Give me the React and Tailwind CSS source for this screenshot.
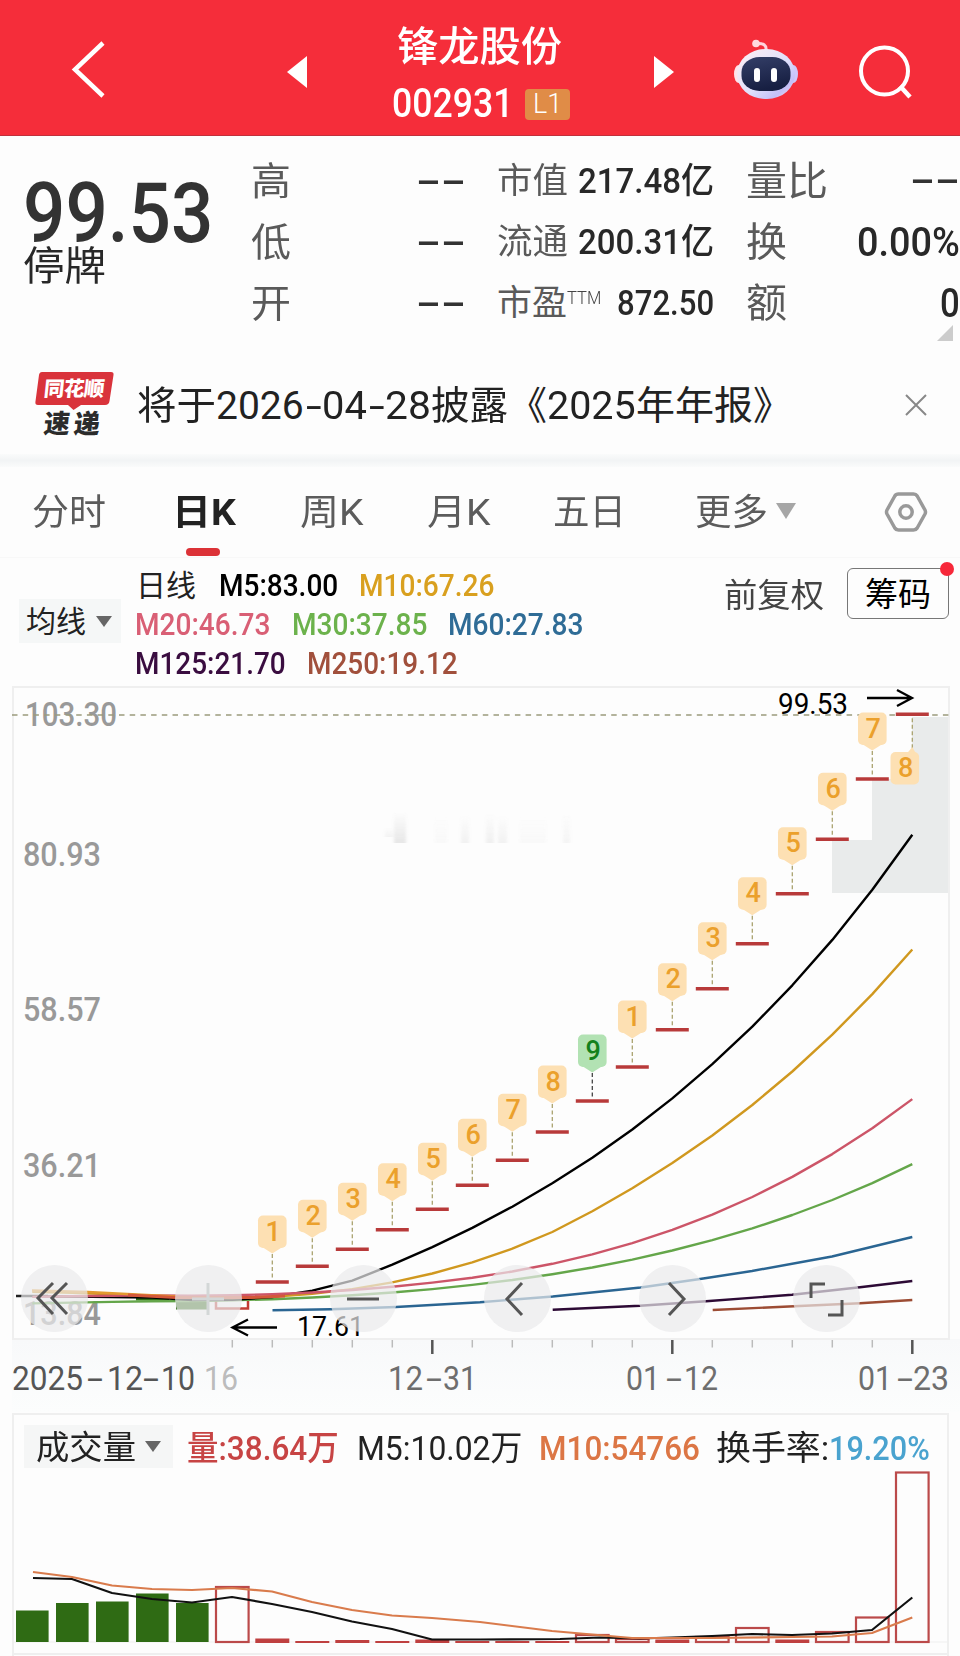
import { useLayoutEffect, useRef, useState } from 'react'
import clsx from 'clsx'

const FONT = 'Roboto, "Noto Sans CJK SC", sans-serif'

const step = 40
const colX = (i) => 32.3 + i * step
const priceY = (p) => 714.3 + (99.53 - p) * 7.29

// closes before the first visible candle, oldest first
const history = [
  16.4, 16.5, 16.6, 16.7, 16.8, 16.8, 16.9, 17, 17.1, 17.2,
  17.6, 17.9, 18.2, 18.4, 18.5, 18.7, 18.9, 19.1, 19.4, 19.6,
  20.6, 21.2, 21.4, 21.1, 20.8, 20.1, 19.9, 19.8, 19.7, 19.6,
]
const closes = [
  19.6, 19.6, 19.5, 19.3, 17.89, 19.68, 21.65, 23.82, 26.2, 28.82, 31.7, 34.87,
  38.36, 42.2, 46.42, 51.06, 56.17, 61.79, 67.97, 74.77, 82.25, 90.48, 99.53,
]

const barY = [
  1282, 1266.3, 1249.3, 1229.7, 1209.3, 1185.3, 1160.3, 1132, 1101, 1067,
  1029.7, 988.7, 943.7, 893.7, 839.3, 779, 714.3,
]
const counts = [1, 2, 3, 4, 5, 6, 7, 8, 9, 1, 2, 3, 4, 5, 6, 7, 8]

const volumes = [
  { top: 1610.5, type: 'down' },
  { top: 1603, type: 'down' },
  { top: 1601.5, type: 'down' },
  { top: 1593.5, type: 'down' },
  { top: 1603, type: 'down' },
  { top: 1587, type: 'up' },
  { top: 1638.5, type: 'flat' },
  { top: 1641, type: 'flat' },
  { top: 1640, type: 'flat' },
  { top: 1641, type: 'flat' },
  { top: 1639.5, type: 'flat' },
  { top: 1641, type: 'flat' },
  { top: 1641, type: 'flat' },
  { top: 1641, type: 'flat' },
  { top: 1635, type: 'up' },
  { top: 1639, type: 'up' },
  { top: 1639.5, type: 'flat' },
  { top: 1637, type: 'up' },
  { top: 1628, type: 'up' },
  { top: 1639.5, type: 'flat' },
  { top: 1632, type: 'up' },
  { top: 1617.5, type: 'up' },
  { top: 1472.5, type: 'up' },
]

function average(n) {
  const all = [...history, ...closes]
  return closes
    .map((_, i) => {
      const end = history.length + i + 1
      const part = all.slice(Math.max(0, end - n), end)
      const avg = part.reduce((a, b) => a + b, 0) / part.length
      return `${colX(i)},${priceY(avg).toFixed(1)}`
    })
    .join(' ')
}

// One line of text squeezed or stretched to a given width
function Fit({ w, className, children }) {
  const ref = useRef(null)
  const [scale, setScale] = useState(1)

  useLayoutEffect(() => {
    setScale(w / ref.current.offsetWidth)
  }, [w])

  return (
    <span className={clsx('block shrink-0 whitespace-nowrap', className)} style={{ width: w }}>
      <span ref={ref} className="inline-block origin-left" style={{ transform: `scaleX(${scale})` }}>
        {children}
      </span>
    </span>
  )
}

function Dashes() {
  return (
    <Fit w={50} className="mb-[7px] font-['Liberation_Sans'] text-[30px] font-bold text-[#333]">
      --
    </Fit>
  )
}

function Robot() {
  return (
    <svg viewBox="0 0 66 62" className="ml-[59px] h-[62px] w-[66px]">
      <path d="M33 12C34 6 30 4 24 4.5" fill="none" stroke="#ffd3dc" strokeWidth="3" />
      <circle cx="23" cy="4.5" r="3.8" fill="#ffd9de" />
      <ellipse cx="5.5" cy="35" rx="4.5" ry="9" fill="#ffe3ea" />
      <ellipse cx="60.5" cy="35" rx="4.5" ry="9" fill="#cfc8fa" />
      <rect x="4" y="10" width="58" height="50" rx="28" ry="25" fill="url(#shell)" />
      <rect x="8.5" y="18" width="49" height="34" rx="18" ry="15" fill="url(#visor)" />
      <rect x="21" y="29" width="6" height="14" rx="3" fill="#fff" />
      <rect x="38" y="29" width="6" height="14" rx="3" fill="#fff" />
      <defs>
        <linearGradient id="shell" x1="0" y1="0" x2="1" y2="1">
          <stop offset="0" stopColor="#fff0f3" />
          <stop offset="0.55" stopColor="#dfe0fb" />
          <stop offset="0.8" stopColor="#c3bff8" />
          <stop offset="1" stopColor="#ffdfe8" />
        </linearGradient>
        <linearGradient id="visor" x1="0" y1="0" x2="0.3" y2="1">
          <stop offset="0" stopColor="#343f68" />
          <stop offset="1" stopColor="#171f42" />
        </linearGradient>
      </defs>
    </svg>
  )
}

function Header() {
  return (
    <header className="flex h-[136px] items-center border-b border-[#c0303c] bg-[#f52d3a] pt-1 text-white">
      <svg viewBox="0 0 36 60" className="ml-[70px] h-[60px] w-9">
        <path d="M33 3L5 29.5L33 56" fill="none" stroke="#fff" strokeWidth="4.5" />
      </svg>
      <svg viewBox="0 0 20 32" className="mt-[5px] ml-[181px] h-8 w-5">
        <path d="M0 16L20 0V32Z" fill="#fff" />
      </svg>
      <div className="ml-[85px] flex w-[178px] flex-col pt-3">
        <Fit w={165} className="ml-[5px] h-[52px] text-[41px] leading-[52px] font-medium">
          锋龙股份
        </Fit>
        <div className="mt-[5px] flex h-[52px] items-center">
          <Fit w={121} className="text-[40px] leading-[52px] font-medium">
            002931
          </Fit>
          <span className="ml-3 flex h-[31px] w-[45px] items-center justify-center rounded bg-[#e08c47] text-[27px] font-light">
            L1
          </span>
        </div>
      </div>
      <svg viewBox="0 0 20 32" className="mt-[5px] ml-[84px] h-8 w-5">
        <path d="M20 16L0 0V32Z" fill="#fff" />
      </svg>
      <Robot />
      <svg viewBox="0 0 56 56" className="mt-1 ml-[58px] h-14 w-14">
        <circle cx="27.5" cy="27" r="23.5" fill="none" stroke="#fff" strokeWidth="4" />
        <path d="M43 42L53 53" stroke="#fff" strokeWidth="4.5" />
      </svg>
    </header>
  )
}

function Quote() {
  return (
    <section className="flex h-[230px] text-[#282828]">
      <div className="w-[252px] pt-[46px]">
        <Fit w={190} className="ml-[23px] h-[64px] text-[84px] leading-[64px] font-medium text-[#333]">
          99.53
        </Fit>
        <Fit w={83} className="mt-px ml-[23px] h-10 text-[40px] leading-[40px]">
          停牌
        </Fit>
      </div>
      <div className="w-[247px] pt-4">
        {['高', '低', '开'].map((name) => (
          <div key={name} className="flex h-[61px] items-center">
            <Fit w={40} className="ml-[-1px] text-[39px] text-[#5a5a5a]">
              {name}
            </Fit>
            <div className="ml-[125px]">
              <Dashes />
            </div>
          </div>
        ))}
      </div>
      <div className="w-[247px] pt-4 text-[35px]">
        <div className="flex h-[61px] items-center">
          <Fit w={71} className="ml-[-2px] text-[#5a5a5a]">市值</Fit>
          <Fit w={136} className="ml-[10px] font-medium">217.48亿</Fit>
        </div>
        <div className="flex h-[61px] items-center">
          <Fit w={71} className="ml-[-2px] text-[#5a5a5a]">流通</Fit>
          <Fit w={136} className="ml-[10px] font-medium">200.31亿</Fit>
        </div>
        <div className="flex h-[61px] items-center">
          <Fit w={70} className="ml-[-2px] text-[#5a5a5a]">市盈</Fit>
          <Fit w={34} className="mb-3 text-[19px] font-light text-[#444]">TTM</Fit>
          <Fit w={97} className="ml-4 font-medium">872.50</Fit>
        </div>
      </div>
      <div className="relative w-[214px] pt-[15px] text-[40px]">
        <div className="flex h-[61px] items-center justify-between">
          <Fit w={82} className="text-[#5a5a5a]">量比</Fit>
          <Dashes />
        </div>
        <div className="flex h-[61px] items-center justify-between">
          <Fit w={41} className="text-[#5a5a5a]">换</Fit>
          <Fit w={103} className="font-medium">0.00%</Fit>
        </div>
        <div className="flex h-[61px] items-center justify-between">
          <Fit w={41} className="text-[#5a5a5a]">额</Fit>
          <Fit w={20} className="font-medium">0</Fit>
        </div>
        <svg viewBox="0 0 16 16" className="absolute top-[189px] right-[7px] h-4 w-4">
          <path d="M16 0V16H0Z" fill="#ccc" />
        </svg>
      </div>
    </section>
  )
}

function News() {
  return (
    <section className="flex h-[88px] items-start text-[39px] leading-[80px] text-[#222]">
      <div className="relative ml-[35px] h-[66px] w-[80px] pt-[6px]">
        <svg viewBox="0 0 80 38" className="h-[38px] w-20">
          <path d="M7 0H76Q79 0 78.5 3L74.5 29Q74 33 70 33H46L38.5 38L33 33H3Q0 33 .4 30L4 3Q4.5 0 7 0Z" fill="#d9333b" />
        </svg>
        <span className="absolute top-[6px] left-[9px] -skew-x-6 text-[20.5px] leading-[34px] font-black tracking-[-0.5px] text-white">
          同花顺
        </span>
        <span className="absolute top-[43px] left-[9px] -skew-x-6 text-[26px] leading-[30px] font-black tracking-[4px] text-[#2b2b2b]">
          速递
        </span>
      </div>
      <div className="ml-[22px] flex">
        <Fit w={79}>将于</Fit>
        <Fit w={88}>2026</Fit>
        <Fit w={16} className="ml-0.5">-</Fit>
        <Fit w={45}>04</Fit>
        <Fit w={16} className="ml-0.5">-</Fit>
        <Fit w={46}>28</Fit>
        <Fit w={77}>披露</Fit>
        <Fit w={39}>《</Fit>
        <Fit w={89}>2025</Fit>
        <Fit w={117}>年年报</Fit>
        <Fit w={39}>》</Fit>
      </div>
      <svg viewBox="0 0 22 22" className="mt-7 ml-[113px] h-[22px] w-[22px]">
        <path d="M1 1L21 21M21 1L1 21" stroke="#888" strokeWidth="2" />
      </svg>
    </section>
  )
}

function Tabs() {
  return (
    <nav className="flex h-[91px] items-start border-b border-[#f8f8f8] text-[36px] leading-[92px] text-[#5c5c5c]">
      <Fit w={74} className="ml-[32px]">分时</Fit>
      <div className="relative ml-[66px]">
        <Fit w={64} className="font-bold text-[#222]">日K</Fit>
        <span className="absolute top-[81px] left-[14px] h-2 w-[34px] rounded-full bg-[#dc3237]" />
      </div>
      <Fit w={64} className="ml-[64px]">周K</Fit>
      <Fit w={64} className="ml-[63px]">月K</Fit>
      <Fit w={73} className="ml-[62px]">五日</Fit>
      <Fit w={73} className="ml-[69px]">更多</Fit>
      <svg viewBox="0 0 20 16" className="mt-[36px] ml-2 h-4 w-5">
        <path d="M0 0H20L10 16Z" fill="#a6a6a6" />
      </svg>
      <svg viewBox="0 0 44 42" className="mt-[24px] ml-[88px] h-[42px] w-11" fill="none" stroke="#999" strokeLinejoin="round">
        <path d="M14.5 3H29.5Q32 3 33.2 5L41 19Q42 21 41 23L33.2 37Q32 39 29.5 39H14.5Q12 39 10.8 37L3 23Q2 21 3 19L10.8 5Q12 3 14.5 3Z" strokeWidth="3.5" />
        <circle cx="22" cy="21" r="6.2" strokeWidth="3.5" />
      </svg>
    </nav>
  )
}

function Legend() {
  return (
    <section className="flex h-[122px] items-start text-[32px] leading-[39px]">
      <div className="mt-[41px] ml-[19px] flex h-11 w-[102px] items-center bg-[#f5f7f7] pl-[7px]">
        <Fit w={60} className="text-[30px] text-[#222]">均线</Fit>
        <svg viewBox="0 0 16 11" className="ml-[10px] h-[11px] w-4">
          <path d="M0 0H16L8 11Z" fill="#666" />
        </svg>
      </div>
      <div className="mt-2 ml-[14px] w-[560px] font-medium">
        <div className="flex">
          <Fit w={60} className="ml-px text-[30px] font-normal text-[#222]">日线</Fit>
          <Fit w={119} className="ml-[23px] text-black">M5:83.00</Fit>
          <Fit w={135} className="ml-[21px] text-[#d9a01f]">M10:67.26</Fit>
        </div>
        <div className="flex">
          <Fit w={135} className="text-[#d95f75]">M20:46.73</Fit>
          <Fit w={135} className="ml-[22px] text-[#6cb24c]">M30:37.85</Fit>
          <Fit w={135} className="ml-[21px] text-[#2f6c96]">M60:27.83</Fit>
        </div>
        <div className="flex">
          <Fit w={151} className="text-[#3a0d40]">M125:21.70</Fit>
          <Fit w={151} className="ml-[21px] text-[#a1503c]">M250:19.12</Fit>
        </div>
      </div>
      <Fit w={100} className="mt-[18px] ml-[29px] text-[33px] text-[#444]">前复权</Fit>
      <div className="relative mt-[10px] ml-[23px] flex h-[51px] w-[102px] items-center justify-center rounded-md border-[1.5px] border-[#777]">
        <Fit w={66} className="pt-0.5 text-[33px] text-black">筹码</Fit>
        <span className="absolute -top-[7px] -right-[6px] h-[14px] w-[14px] rounded-full bg-[#f7283a]" />
      </div>
    </section>
  )
}

function CountTag({ x, y, n, last }) {
  const green = n === 9
  const cx = last ? x - 7.5 : x
  const top = last ? 752 : y - 66.5
  return (
    <g>
      <path
        d={last ? `M${x} ${y + 4}V749` : `M${x} ${y - 28}V${y - 2}`}
        stroke={green ? '#444' : '#a9a26f'}
        strokeWidth="1.3"
        strokeDasharray="4 2.5"
      />
      <rect x={cx - 14.3} y={top} width="28.6" height="32.5" rx="5" fill={green ? '#b2e2b3' : '#fde0b3'} />
      {last ? (
        <path d={`M${x - 5} 753L${x} 747L${x + 4} 754Z`} fill="#fde0b3" />
      ) : (
        <path d={`M${x - 11} ${top + 31}L${x} ${top + 38}L${x + 11} ${top + 31}Z`} fill={green ? '#b2e2b3' : '#fde0b3'} />
      )}
      <text x={cx + 1} y={top + 25.2} textAnchor="middle" fontSize="27" fontWeight="500" fill={green ? '#12811c' : '#eba02c'}>
        {n}
      </text>
    </g>
  )
}

function AxisText({ x, y, w, fill = '#999', size = 33, weight = 500, children }) {
  return (
    <text x={x} y={y} fontSize={size} fontWeight={weight} fill={fill} textLength={w} lengthAdjust="spacingAndGlyphs">
      {children}
    </text>
  )
}

// Date with wide hyphens: each part is [text, x, width]
function DateText({ parts, fill }) {
  return (
    <text y="1390" fontSize="33" fontWeight="400" fill={fill}>
      {parts.map(([text, x, w]) => (
        <tspan key={x} x={x} textLength={w} lengthAdjust="spacingAndGlyphs">
          {text}
        </tspan>
      ))}
    </text>
  )
}

const dates = [
  { fill: '#555', parts: [['2025', 12, 71], ['-', 87, 16], ['12', 107, 36], ['-', 143, 16], ['10', 161, 34]] },
  { fill: '#bcbcbc', parts: [['16', 204, 34]] },
  { fill: '#6e6e6e', parts: [['12', 388, 35], ['-', 426, 16], ['31', 443, 34]] },
  { fill: '#6e6e6e', parts: [['01', 626, 34], ['-', 666, 16], ['12', 684, 34]] },
  { fill: '#6e6e6e', parts: [['01', 858, 34], ['-', 897, 16], ['23', 913, 36]] },
]

const controls = [
  <path key="first" d="M32 18L17 33L32 49M46 18L31 33L46 49" />,
  <path key="in" d="M33 18V50M17 34H49" stroke="#d3d7d7" />,
  <path key="out" d="M17 34H49" />,
  <path key="prev" d="M38 18L23 34L38 50" />,
  <path key="next" d="M30 18L45 34L30 50" />,
  <path key="full" d="M18 33V19H32M35 50H49V35" />,
]

function PriceChart() {
  return (
    <section className="relative h-[733px]">
      <svg viewBox="0 680 960 733" className="block h-[733px] w-full" fontFamily={FONT}>
        <defs>
          <linearGradient id="axisBg" x1="0" y1="0" x2="0" y2="1">
            <stop offset="0" stopColor="#f8f9fa" />
            <stop offset="1" stopColor="#fcfdfd" />
          </linearGradient>
          <linearGradient id="smear" x1="0" y1="0" x2="0" y2="1">
            <stop offset="0" stopColor="#999" stopOpacity="0" />
            <stop offset="1" stopColor="#999" stopOpacity="0.22" />
          </linearGradient>
          <filter id="soft">
            <feGaussianBlur stdDeviation="1.8 0.4" />
          </filter>
        </defs>
        <rect x="12" y="1339" width="948" height="73" fill="url(#axisBg)" />
        <rect x="13" y="687" width="936" height="652" fill="#fdfdfd" stroke="#efefef" strokeWidth="2" />
        <g fill="url(#smear)" filter="url(#soft)">
          <rect x="385" y="828" width="8" height="9" opacity="0.5" />
          <rect x="394" y="812" width="12" height="31" />
          <rect x="435" y="816" width="12" height="27" opacity="0.2" />
          <rect x="461" y="814" width="8" height="29" opacity="0.5" />
          <rect x="486" y="814" width="8" height="29" opacity="0.6" />
          <rect x="498" y="814" width="9" height="29" opacity="0.5" />
          <rect x="520" y="816" width="26" height="27" opacity="0.2" />
          <rect x="563" y="814" width="7" height="29" opacity="0.4" />
        </g>
        <path d="M832 840H872V779H912V717H948V893H832Z" fill="#e9ebeb" />

        <AxisText x={25} y={726} w={92}>103.30</AxisText>
        <AxisText x={23} y={865.5} w={78}>80.93</AxisText>
        <AxisText x={23} y={1020.5} w={78}>58.57</AxisText>
        <AxisText x={23} y={1176.5} w={78}>36.21</AxisText>
        <AxisText x={23} y={1325} w={78}>13.84</AxisText>
        <path d="M12 715H949" stroke="#9b9b7c" strokeWidth="1.5" strokeDasharray="5.5 5.2" />

        {/* first candles */}
        <path d="M16 1296H48" stroke="#222" strokeWidth="2.5" />
        <path d="M56 1296.5H136" stroke="#c23c35" strokeWidth="3" />
        <path d="M136 1299H169" stroke="#2f6b14" strokeWidth="3" />
        <rect x="176" y="1298" width="32.5" height="11.5" fill="#2f6b14" />
        <rect x="216" y="1297" width="32" height="11.5" fill="#fff" stroke="#c23c35" strokeWidth="2.5" />

        {/* averages */}
        <g fill="none" strokeWidth="2.4" strokeLinejoin="round">
          <polyline points={average(30)} stroke="#64a64a" />
          <polyline points={average(5)} stroke="#000" />
          <polyline points={average(10)} stroke="#d0981f" />
          <polyline points={average(20)} stroke="#cc5568" />
          <polyline
            stroke="#2a6592"
            points="272.5,1310.3 331,1309.3 396,1307 480,1302.3 552.7,1296.5 640.7,1287.5 700,1279 752,1271 832,1256.5 912.3,1237"
          />
          <polyline stroke="#2d0a35" points="552.7,1309.8 640,1305.8 706,1301.3 792,1294.7 860,1287.3 912.3,1281" />
          <polyline stroke="#9c4c34" points="712.7,1310 794,1306.3 860,1303.3 912.3,1300" />
        </g>
        <path d="M32 1290.5L88 1292L176 1296.5" fill="none" stroke="#e39a2f" strokeWidth="2.4" />
        <path d="M128 1295L176 1297.5L248 1297.5L285 1296" fill="none" stroke="#d4583a" strokeWidth="3" />

        {barY.map((y, k) => (
          <g key={k}>
            <CountTag x={colX(k + 6)} y={y} n={counts[k]} last={k === barY.length - 1} />
            <path d={`M${colX(k + 6) - 16.5} ${y}h33`} stroke="#b83a3a" strokeWidth="3.4" />
          </g>
        ))}

        <AxisText x={778} y={714} w={70} size={29} weight={400} fill="#000">99.53</AxisText>
        <path d="M867 698H911M897 690L912 698L897 706" fill="none" stroke="#000" strokeWidth="2.3" />
        <AxisText x={297} y={1335.5} w={67} size={28} weight={400} fill="#000">17.61</AxisText>
        <path d="M277 1327.5H233M248 1319.5L232.5 1327.5L248 1335.5" fill="none" stroke="#000" strokeWidth="2.3" />

        {/* time axis */}
        {Array.from({ length: 18 }, (_, k) => k + 5).map((i) => {
          const major = i === 10 || i === 16 || i === 22
          return (
            <path
              key={i}
              d={`M${colX(i)} 1340V${major ? 1354 : 1347.5}`}
              stroke={major ? '#555' : '#bbb'}
              strokeWidth={major ? 2.5 : 1.5}
            />
          )
        })}
        {dates.map((d) => (
          <DateText key={d.parts[0][1]} {...d} />
        ))}
      </svg>

      <div className="absolute top-[585px] left-[21px] flex w-[839px] justify-between">
        {controls.map((icon) => (
          <button key={icon.key} className="h-[67px] w-[67px] rounded-full bg-[#e9eaeb]/70">
            <svg viewBox="0 0 67 67" className="h-[67px] w-[67px]" fill="none" stroke="#555" strokeWidth="3">
              {icon}
            </svg>
          </button>
        ))}
      </div>
    </section>
  )
}

function VolumeChart() {
  return (
    <section className="mr-[11px] ml-3 h-[243px] overflow-hidden border-x-2 border-t-2 border-[#efefef] text-[34px] leading-[46px]">
      <div className="flex h-[58px] items-start pt-[10px]">
        <div className="ml-[10px] flex h-[43px] w-[149px] items-center bg-[#f5f6f6] pl-3">
          <Fit w={100} className="pt-0.5 text-[33px] text-[#222]">成交量</Fit>
          <svg viewBox="0 0 16 11" className="ml-[9px] h-[11px] w-4">
            <path d="M0 0H16L8 11Z" fill="#666" />
          </svg>
        </div>
        <Fit w={152} className="ml-[14px] font-medium text-[#c74444]">量:38.64万</Fit>
        <Fit w={165} className="ml-[18px] text-[#222]">M5:10.02万</Fit>
        <Fit w={161} className="ml-[17px] font-medium text-[#dc7645]">M10:54766</Fit>
        <Fit w={113} className="ml-4 text-[#222]">换手率:</Fit>
        <Fit w={101} className="font-medium text-[#4aa3cf]">19.20%</Fit>
      </div>
      <svg viewBox="14 1473 933 183" className="block h-[183px] w-[933px] overflow-visible">
        <path d="M14 1642H947" stroke="#f3f3f3" strokeWidth="1.5" />
        <path d="M14 1654H947" stroke="#efefef" strokeWidth="2" />
        {volumes.map((v, i) => {
          const x = colX(i) - 16.3
          if (v.type === 'down') {
            return <rect key={i} x={x} y={v.top} width="32.6" height={1642 - v.top} fill="#2f6b14" />
          }
          if (v.type === 'flat') {
            return <rect key={i} x={x - 0.7} y={v.top} width="34" height={1643 - v.top} fill="#bf4040" />
          }
          return (
            <rect
              key={i}
              x={x}
              y={v.top}
              width="32.6"
              height={1642 - v.top}
              fill="#fdfdfd"
              stroke="#bb4a4a"
              strokeWidth="2.2"
            />
          )
        })}
        <g fill="none" strokeWidth="2.2" strokeLinejoin="round">
          <polyline
            stroke="#111"
            points="33,1578 72,1579 112,1593 152,1599 192,1602.5 232,1597 272,1604 312,1612 352,1621.5 392,1629 432,1639.5 480,1639.5 560,1639 600,1637.5 640,1638.5 672,1637.5 712,1636 752,1634 792,1635 832,1633.5 872,1630 912.3,1597.5"
          />
          <polyline
            stroke="#d97b4c"
            points="33,1572 72,1577 112,1585.5 152,1589 192,1590 232,1588 272,1591.5 312,1602 352,1610 392,1615.5 432,1618 480,1622 552,1631 632,1638 712,1638 792,1637 832,1636.5 872,1633 912.3,1617.5"
          />
        </g>
      </svg>
    </section>
  )
}

export default function App() {
  return (
    <div className="h-[1656px] w-[960px] overflow-hidden bg-[#fdfdfd] font-[Roboto,'Noto_Sans_CJK_SC',sans-serif]">
      <Header />
      <Quote />
      <News />
      <div className="h-[13px] bg-gradient-to-b from-[#fafbfb] via-[#f2f4f5] to-[#fafbfb]" />
      <Tabs />
      <Legend />
      <PriceChart />
      <VolumeChart />
    </div>
  )
}
